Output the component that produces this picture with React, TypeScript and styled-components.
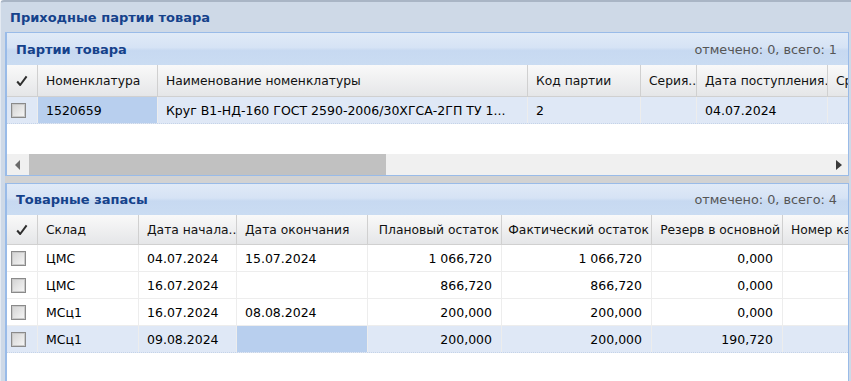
import React from 'react'
import styled, { createGlobalStyle } from 'styled-components'

type Col = { title: string; w: number; align?: 'left' | 'right' }

type Row = {
  cells: string[]
  selected?: boolean
  activeCell?: number
}

const batchCols: Col[] = [
  { title: 'Номенклатура', w: 120 },
  { title: 'Наименование номенклатуры', w: 370 },
  { title: 'Код партии', w: 113 },
  { title: 'Серия..', w: 56 },
  { title: 'Дата поступления.', w: 131 },
  { title: 'Срок годности', w: 100 },
]

const batchRows: Row[] = [
  {
    cells: ['1520659', 'Круг В1-НД-160 ГОСТ 2590-2006/30ХГСА-2ГП ТУ 1...', '2', '', '04.07.2024', ''],
    selected: true,
    activeCell: 0,
  },
]

const stockCols: Col[] = [
  { title: 'Склад', w: 101 },
  { title: 'Дата начала..', w: 98 },
  { title: 'Дата окончания', w: 131 },
  { title: 'Плановый остаток', w: 134, align: 'right' },
  { title: 'Фактический остаток', w: 150, align: 'right' },
  { title: 'Резерв в основной', w: 131, align: 'right' },
  { title: 'Номер карточки', w: 100 },
]

const stockRows: Row[] = [
  { cells: ['ЦМС', '04.07.2024', '15.07.2024', '1 066,720', '1 066,720', '0,000', ''] },
  { cells: ['ЦМС', '16.07.2024', '', '866,720', '866,720', '0,000', ''] },
  { cells: ['МСц1', '16.07.2024', '08.08.2024', '200,000', '200,000', '0,000', ''] },
  { cells: ['МСц1', '09.08.2024', '', '200,000', '200,000', '190,720', ''], selected: true, activeCell: 2 },
]

const CheckIcon = () => (
  <svg width="12" height="12" viewBox="0 0 12 12">
    <path d="M1.2 6.5 L4.2 10 L10.6 1.4" fill="none" stroke="#2e2e2e" strokeWidth="2" strokeLinejoin="round" />
  </svg>
)

const Arrow = ({ dir }: { dir: 'left' | 'right' }) => (
  <svg width="6" height="10" viewBox="0 0 6 10">
    {dir === 'left' ? <path d="M5 0 L0 5 L5 10 Z" fill="#6a6a6a" /> : <path d="M0 0 L6 5 L0 10 Z" fill="#3a3a3a" />}
  </svg>
)

type GridProps = {
  cols: Col[]
  rows: Row[]
  headerH: number
}

const Grid = ({ cols, rows, headerH }: GridProps) => (
  <>
    <HeaderRow $h={headerH}>
      <HeaderCell $w={31} $align="center">
        <CheckIcon />
      </HeaderCell>
      {cols.map(c => (
        <HeaderCell key={c.title} $w={c.w} $align={c.align || 'left'}>
          {c.title}
        </HeaderCell>
      ))}
    </HeaderRow>
    {rows.map((r, i) => (
      <DataRow key={i} $selected={!!r.selected}>
        <Cell $w={31} $align="left">
          <Checkbox />
        </Cell>
        {cols.map((c, j) => (
          <Cell key={j} $w={c.w} $align={c.align || 'left'} $active={r.activeCell === j}>
            {r.cells[j]}
          </Cell>
        ))}
      </DataRow>
    ))}
  </>
)

const App = () => (
  <>
    <GlobalStyle />
    <Window>
      <WindowTitle>Приходные партии товара</WindowTitle>
      <WindowBody>
        <Panel>
          <PanelHeader $h={32}>
            <PanelTitle>Партии товара</PanelTitle>
            <Counter>отмечено: 0, всего: 1</Counter>
          </PanelHeader>
          <Grid cols={batchCols} rows={batchRows} headerH={31} />
          <Filler />
          <Scrollbar>
            <ScrollButton $w={22}>
              <Arrow dir="left" />
            </ScrollButton>
            <Thumb />
            <Track />
            <ScrollButton $w={18}>
              <Arrow dir="right" />
            </ScrollButton>
          </Scrollbar>
        </Panel>
        <Splitter />
        <Panel $grow>
          <PanelHeader $h={31}>
            <PanelTitle>Товарные запасы</PanelTitle>
            <Counter>отмечено: 0, всего: 4</Counter>
          </PanelHeader>
          <Grid cols={stockCols} rows={stockRows} headerH={29} />
        </Panel>
      </WindowBody>
    </Window>
  </>
)

const GlobalStyle = createGlobalStyle`
  html, body {
    margin: 0;
    padding: 0;
    background: #fff;
  }
  body {
    font-family: "DejaVu Sans", Tahoma, sans-serif;
    font-size: 12.5px;
    color: #000;
  }
`

const Window = styled.div`
  width: 851px;
  height: 381px;
  box-sizing: border-box;
  background: #ced9e7;
  border-top: 2px solid #a9b5c5;
  border-left: 1px solid #e4eaf2;
  border-top-left-radius: 4px;
  overflow: hidden;
  display: flex;
  flex-direction: column;
`

const WindowTitle = styled.div`
  height: 30px;
  flex-shrink: 0;
  display: flex;
  align-items: center;
  padding-left: 9px;
  font-weight: bold;
  font-size: 13px;
  color: #15428b;
`

const WindowBody = styled.div`
  flex: 1;
  min-height: 0;
  display: flex;
  flex-direction: column;
  padding: 0 2px 0 4px;
`

const Panel = styled.div<{ $grow?: boolean }>`
  flex: ${p => (p.$grow ? 1 : 'none')};
  min-height: 0;
  display: flex;
  flex-direction: column;
  background: #fff;
  border: 1px solid #99bbe8;
  border-left-width: 2px;
  border-bottom-width: ${p => (p.$grow ? 0 : 1)}px;
  overflow: hidden;
`

const PanelHeader = styled.div<{ $h: number }>`
  height: ${p => p.$h}px;
  flex-shrink: 0;
  box-sizing: border-box;
  display: flex;
  align-items: center;
  justify-content: space-between;
  padding: 0 11px 0 9px;
  background: linear-gradient(to bottom, #e0eaf7 0%, #d6e3f5 45%, #c7d9f1 55%, #cadcf2 100%);
`

const PanelTitle = styled.span`
  font-weight: bold;
  font-size: 13px;
  color: #15428b;
`

const Counter = styled.span`
  color: #555;
  font-size: 12.8px;
`

const HeaderRow = styled.div<{ $h: number }>`
  display: flex;
  flex-shrink: 0;
  height: ${p => p.$h}px;
  background: linear-gradient(to bottom, #f9f9f9, #e5e6e8);
  border-bottom: 1px solid #d0d0d0;
`

const HeaderCell = styled.div<{ $w: number; $align: string }>`
  width: ${p => p.$w}px;
  flex-shrink: 0;
  box-sizing: border-box;
  display: flex;
  align-items: center;
  justify-content: ${p => (p.$align === 'right' ? 'flex-end' : p.$align === 'center' ? 'center' : 'flex-start')};
  padding: 0 ${p => (p.$align === 'center' ? 0 : 2)}px 0 ${p => (p.$align === 'center' ? 0 : 8)}px;
  border-right: 1px solid #d0d0d0;
  font-size: 12.3px;
  white-space: nowrap;
  overflow: hidden;
  color: #111;
`

const DataRow = styled.div<{ $selected: boolean }>`
  display: flex;
  flex-shrink: 0;
  height: 27px;
  box-sizing: border-box;
  background: ${p => (p.$selected ? '#dfe8f6' : '#fff')};
  border-bottom: 1px ${p => (p.$selected ? 'dotted #c5d3e8' : 'solid #ededed')};
`

const Cell = styled.div<{ $w: number; $align: string; $active?: boolean }>`
  width: ${p => p.$w}px;
  flex-shrink: 0;
  box-sizing: border-box;
  display: flex;
  align-items: center;
  justify-content: ${p => (p.$align === 'right' ? 'flex-end' : 'flex-start')};
  padding: 0 ${p => (p.$align === 'right' ? 9 : 3)}px 0 ${p => (p.$w === 31 ? 4 : 8)}px;
  border-right: 1px solid #ededed;
  background: ${p => (p.$active ? '#b8cfee' : 'transparent')};
  white-space: nowrap;
  overflow: hidden;
`

const Checkbox = styled.span`
  width: 13px;
  height: 13px;
  border: 1px solid #8a8a8a;
  box-shadow: inset 0 0 0 1px #c9c9c9;
  background: linear-gradient(135deg, #d2d2d2, #f7f7f7);
`

const Filler = styled.div`
  height: 30px;
  flex-shrink: 0;
`

const Scrollbar = styled.div`
  height: 21px;
  flex-shrink: 0;
  display: flex;
  background: #f0f0f0;
`

const ScrollButton = styled.div<{ $w: number }>`
  width: ${p => p.$w}px;
  flex-shrink: 0;
  display: flex;
  align-items: center;
  justify-content: center;
`

const Thumb = styled.div`
  width: 357px;
  flex-shrink: 0;
  background: #c1c1c1;
`

const Track = styled.div`
  flex: 1;
`

const Splitter = styled.div`
  height: 7px;
  flex-shrink: 0;
  background: #d2d2d2;
`

export default App
